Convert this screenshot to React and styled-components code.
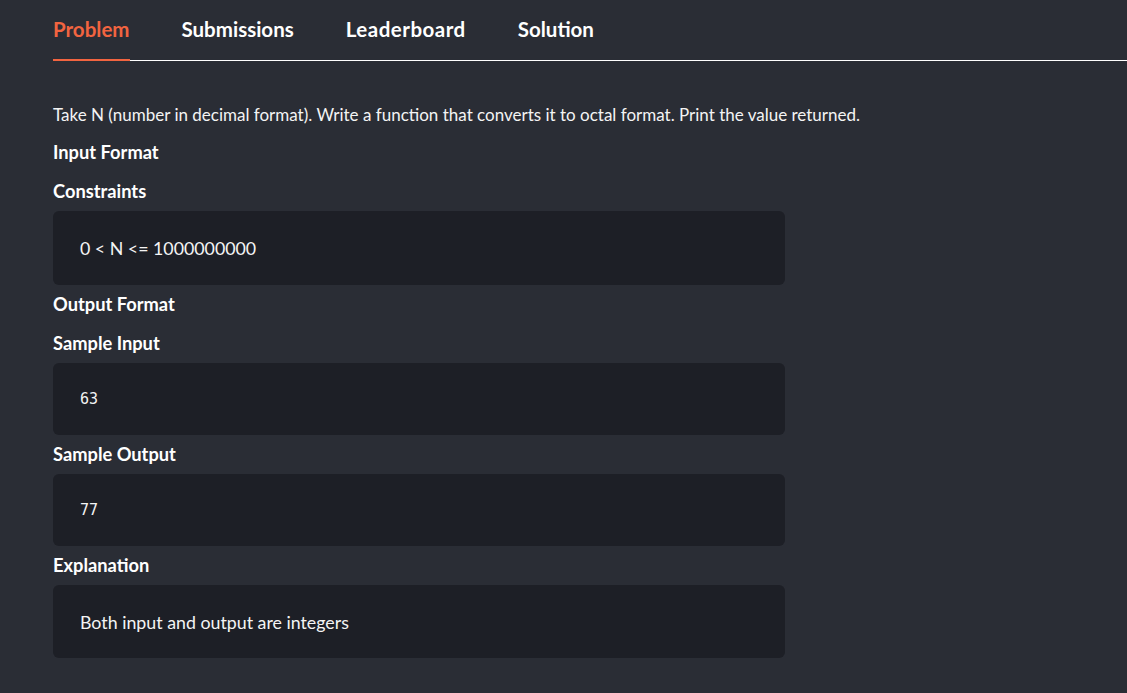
import React, { useState } from 'react';
import styled, { createGlobalStyle } from 'styled-components';

const Global = createGlobalStyle`
  html, body {
    margin: 0;
    padding: 0;
    background: #2a2d35;
    height: 100%;
  }
  body {
    font-family: Lato, "Noto Sans", sans-serif;
    color: #ffffff;
  }
`;

const Page = styled.div`
  min-height: 693px;
  padding-left: 53px;
  box-sizing: border-box;
`;

const Tabs = styled.nav`
  display: flex;
  gap: 52px;
  height: 61px;
  border-bottom: 1px solid #ffffff;
  box-sizing: border-box;
`;

const Tab = styled.div`
  display: flex;
  align-items: center;
  height: 61px;
  padding-bottom: 2px;
  font-size: 20.5px;
  font-weight: 700;
  letter-spacing: ${p => p.$ls || 0}px;
  color: ${p => (p.$active ? '#f26440' : '#ffffff')};
  border-bottom: 2px solid ${p => (p.$active ? '#f26440' : 'transparent')};
  cursor: pointer;
  margin-bottom: -1px;
  box-sizing: border-box;
`;

const Body = styled.div`
  padding-top: 35px;
  width: 732px;
`;

const Text = styled.p`
  margin: 0;
  line-height: 37px;
  font-size: 17px;
  white-space: nowrap;
  color: #f4f4f4;
`;

const Heading = styled.h4`
  margin: 0;
  line-height: 39px;
  font-size: 18.3px;
  font-weight: 700;
`;

const Box = styled.div`
  background: #1d1f26;
  border-radius: 6px;
  padding: 0 27px;
  height: ${p => p.$h}px;
  display: flex;
  align-items: center;
  font-size: ${p => (p.$mono ? '15px' : '17.8px')};
  font-family: ${p => (p.$mono ? '"DejaVu Sans Mono", "Liberation Mono", monospace' : 'inherit')};
  color: #f4f4f4;
`;

const tabs = [
  { name: 'Problem', ls: 0 },
  { name: 'Submissions', ls: 0 },
  { name: 'Leaderboard', ls: 0.5 },
  { name: 'Solution', ls: 0 },
];

export default function App() {
  const [active, setActive] = useState('Problem');
  return (
    <>
      <Global />
      <Page>
        <Tabs>
          {tabs.map(t => (
            <Tab key={t.name} $ls={t.ls} $active={active === t.name} onClick={() => setActive(t.name)}>{t.name}</Tab>
          ))}
        </Tabs>
        <Body>
          <Text>Take N (number in decimal format). Write a function that converts it to octal format. Print the value returned.</Text>
          <Heading>Input Format</Heading>
          <Heading>Constraints</Heading>
          <Box $h={74}>0 &lt; N &lt;= 1000000000</Box>
          <Heading>Output Format</Heading>
          <Heading>Sample Input</Heading>
          <Box $h={72} $mono>63</Box>
          <Heading>Sample Output</Heading>
          <Box $h={72} $mono>77</Box>
          <Heading>Explanation</Heading>
          <Box $h={73}>Both input and output are integers</Box>
        </Body>
      </Page>
    </>
  );
}
